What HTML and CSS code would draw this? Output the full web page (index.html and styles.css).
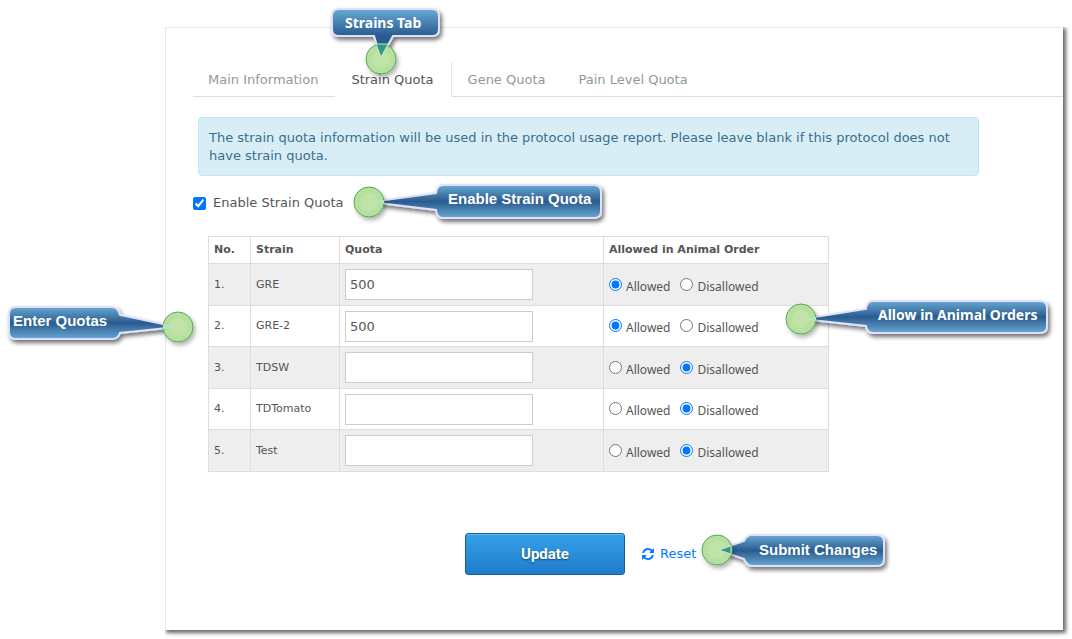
FILE: index.html
```
<!DOCTYPE html>
<html lang="en">
<head>
<meta charset="utf-8">
<title>Strain Quota</title>
<link rel="stylesheet" href="styles.css">
</head>
<body>
<main class="panel">
  <nav class="tabs">
    <a class="tab" href="#main">Main Information</a>
    <a class="tab active" href="#strain">Strain Quota</a>
    <a class="tab" href="#gene">Gene Quota</a>
    <a class="tab" href="#pain">Pain Level Quota</a>
  </nav>
  <p class="notice">The strain quota information will be used in the protocol usage report. Please leave blank if this protocol does not have strain quota.</p>
  <form class="form">
    <label class="enable"><input type="checkbox" checked>Enable Strain Quota</label>
    <table class="quota">
      <colgroup><col class="c-no"><col class="c-strain"><col class="c-quota"><col class="c-order"></colgroup>
      <thead><tr><th>No.</th><th>Strain</th><th>Quota</th><th>Allowed in Animal Order</th></tr></thead>
      <tbody>
        <tr><td>1.</td><td>GRE</td><td><input class="text" type="text" value="500" aria-label="Quota for GRE"></td>
          <td><div class="choices"><label><input type="radio" name="r1" checked><span>Allowed</span></label><label><input type="radio" name="r1"><span>Disallowed</span></label></div></td></tr>
        <tr><td>2.</td><td>GRE-2</td><td><input class="text" type="text" value="500" aria-label="Quota for GRE-2"></td>
          <td><div class="choices"><label><input type="radio" name="r2" checked><span>Allowed</span></label><label><input type="radio" name="r2"><span>Disallowed</span></label></div></td></tr>
        <tr><td>3.</td><td>TDSW</td><td><input class="text" type="text" aria-label="Quota for TDSW"></td>
          <td><div class="choices"><label><input type="radio" name="r3"><span>Allowed</span></label><label><input type="radio" name="r3" checked><span>Disallowed</span></label></div></td></tr>
        <tr><td>4.</td><td>TDTomato</td><td><input class="text" type="text" aria-label="Quota for TDTomato"></td>
          <td><div class="choices"><label><input type="radio" name="r4"><span>Allowed</span></label><label><input type="radio" name="r4" checked><span>Disallowed</span></label></div></td></tr>
        <tr><td>5.</td><td>Test</td><td><input class="text" type="text" aria-label="Quota for Test"></td>
          <td><div class="choices"><label><input type="radio" name="r5"><span>Allowed</span></label><label><input type="radio" name="r5" checked><span>Disallowed</span></label></div></td></tr>
      </tbody>
    </table>
    <div class="actions">
      <button class="update" type="button">Update</button>
      <a class="reset" href="#reset"><svg width="12" height="12" viewBox="0 0 1536 1536" aria-hidden="true"><path fill="currentColor" d="M1511 928q0 5-1 7-64 268-268 434.500T764 1536q-146 0-282.500-55T238 1324l-129 129q-19 19-45 19t-45-19-19-45V960q0-26 19-45t45-19h448q26 0 45 19t19 45-19 45l-137 137q71 66 161 102t187 36q134 0 250-65t186-179q11-17 53-117 8-23 30-23h192q13 0 22.500 9.500t9.500 22.500zm25-800v448q0 26-19 45t-45 19h-448q-26 0-45-19t-19-45 19-45l138-138Q969 256 768 256q-134 0-250 65T332 500q-11 17-53 117-8 23-30 23H50q-13 0-22.500-9.500T18 608v-7q65-268 270-434.500T768 0q146 0 284 55.500T1297 212l130-129q19-19 45-19t45 19 19 45z"/></svg>Reset</a>
    </div>
  </form>
</main>
<svg class="callouts" width="1072" height="639" viewBox="0 0 1072 639">
  <defs>
    <linearGradient id="half" gradientUnits="userSpaceOnUse" x1="0" y1="9" x2="0" y2="36"><stop offset="0" stop-color="#69a9d3"/><stop offset="1" stop-color="#2a5b8f"/></linearGradient>
    <linearGradient id="full" x1="0" y1="0" x2="0" y2="1"><stop offset="0" stop-color="#69a9d3"/><stop offset=".5" stop-color="#2a5b8f"/><stop offset="1" stop-color="#69a9d3"/></linearGradient>
    <filter id="shade" x="-20%" y="-30%" width="150%" height="180%"><feDropShadow dx="2" dy="3" stdDeviation="2" flood-color="#000" flood-opacity=".55"/></filter>
    <filter id="faint" x="-20%" y="-30%" width="150%" height="180%"><feDropShadow dx="2" dy="3" stdDeviation="2" flood-color="#000" flood-opacity=".3"/></filter>
  </defs>
  <g class="bubble" filter="url(#shade)">
    <path fill="url(#half)" d="M339 9H432Q439 9 439 16V29Q439 36 432 36H393L381 58L374 36H339Q332 36 332 29V16Q332 9 339 9Z"/>
    <path fill="url(#full)" d="M443 185H594Q601 185 601 192V211Q601 218 594 218H443Q437 218 436 210L370 202L436 193Q437 185 443 185Z"/>
    <path fill="url(#full)" d="M16 307H112Q118 307 120 315L177 327L120 333Q118 339 112 339H16Q9 339 9 332V314Q9 307 16 307Z"/>
    <path fill="url(#full)" d="M873 301H1040Q1047 301 1047 308V326Q1047 333 1040 333H873Q867 333 866 326L802 319L866 309Q867 301 873 301Z"/>
    <path fill="url(#full)" d="M752 535H877Q884 535 884 542V559Q884 566 877 566H752Q747 566 744 559L718 550L744 541Q747 535 752 535Z"/>
  </g>
  <g class="pin" filter="url(#faint)">
    <circle cx="381" cy="59" r="15"/><circle cx="369" cy="202" r="15"/><circle cx="178" cy="327" r="15"/><circle cx="801" cy="319" r="15"/><circle cx="717" cy="550" r="15"/>
  </g>
  <g class="pin-glow">
    <circle cx="381" cy="59" r="9"/><circle cx="369" cy="202" r="9"/><circle cx="178" cy="327" r="9"/><circle cx="801" cy="319" r="9"/><circle cx="717" cy="550" r="9"/>
  </g>
  <g class="tip">
    <path class="deep" d="M376 44L381 57L388 44Z"/><path d="M371 202L384 200V204Z"/><path d="M176 327L163 324V329Z"/><path d="M803 319L816 317V321Z"/><path class="deep" d="M719 550L731 546V554Z"/>
  </g>
  <g class="caption">
    <text class="humanist" x="345" y="28">Strains Tab</text>
    <text x="448" y="204">Enable Strain Quota</text>
    <text x="13" y="326">Enter Quotas</text>
    <text class="humanist" x="878" y="320">Allow in Animal Orders</text>
    <text x="759" y="555">Submit Changes</text>
  </g>
</svg>
</body>
</html>
```
FILE: styles.css
```
* { box-sizing: border-box; }
body {
  margin: 0;
  padding: 27px 9px 8px 165px;
  position: relative;
  background: #fff;
  color: #555;
  font: 13px/18px Verdana, "DejaVu Sans", sans-serif;
}
a { text-decoration: none; }
.panel {
  padding: 34px 0 55px 27px;
  border: 1px solid #e8e8e8;
  border-right: 0;
  border-bottom: 0;
  background: #fff;
  box-shadow: 2px 2px 4px 1px rgba(0, 0, 0, .6);
  clip-path: inset(0 -8px -8px 0);
}
.tabs { display: flex; }
.tabs::after { content: ""; flex: 1; border-bottom: 1px solid #ddd; }
.tab {
  padding: 9px 17px 7px 16px;
  border-bottom: 1px solid #ddd;
  color: #8d9a9e;
}
.tab:first-child { padding-left: 15px; }
.tab.active {
  border-bottom-color: transparent;
  border-right: 1px solid #e5e5e5;
  color: #555;
}
.notice {
  max-width: 782px;
  margin: 20px 84px 0 5px;
  padding: 11px 10px 10px;
  border: 1px solid #bce8f1;
  border-radius: 4px;
  background: #d9edf7;
  color: #3a6f8c;
}
.enable { display: flex; align-items: center; gap: 7px; margin-top: 18px; }
input[type="checkbox"], input[type="radio"] { width: 13px; height: 13px; margin: 0; accent-color: #0075ff; }
.quota {
  width: 621px;
  margin: 24px 0 0 15px;
  table-layout: fixed;
  border-collapse: collapse;
  font-size: 11px;
}
.c-no { width: 42px; }
.c-strain { width: 89px; }
.c-quota { width: 264px; }
.quota th, .quota td { padding: 0 5px; border: 1px solid #ddd; text-align: left; }
.quota th { height: 27px; }
.quota td { height: 42px; }
.quota tr:nth-child(even) td { height: 41px; }
.quota tbody tr:nth-child(odd) { background: #eee; }
.text {
  display: block;
  width: 188px;
  height: 31px;
  padding: 0 4px;
  border: 1px solid #ccc;
  background: #fff;
  color: #555;
  font: inherit;
  font-size: 13px;
}
.choices { display: flex; gap: 10px; padding-top: 2px; font-family: "Noto Sans", sans-serif; font-size: 12px; }
.choices label { display: flex; align-items: flex-start; gap: 4px; }
.choices span { padding-top: 2px; line-height: 14px; }
.actions { display: flex; align-items: center; gap: 17px; margin: 61px 0 0 272px; }
.update {
  width: 160px;
  height: 42px;
  border: 1px solid #17609c;
  border-radius: 3px;
  background: linear-gradient(#34a0e8, #217ccb);
  box-shadow: inset 0 1px #64b6ee;
  color: #fff;
  font: bold 15px Roboto, sans-serif;
  text-shadow: 0 1px 2px rgba(0, 0, 0, .5);
}
.reset { display: flex; align-items: center; gap: 6px; color: #007bff; }
.callouts { position: absolute; top: 0; left: 0; pointer-events: none; }
.bubble { stroke: #dfe0fa; stroke-width: 2; }
.pin { fill: #b9dfa0; stroke: #4cae50; stroke-width: 1; }
.pin-glow { fill: #c0e4a7; }
.tip { fill: #b0e6c0; }
.deep { fill: #34968a; stroke: #b5e8c4; stroke-width: 1; }
.caption { fill: #fff; font: bold 15px "Liberation Sans", Arial, sans-serif; }
.humanist { font: bold 14px "Noto Sans", sans-serif; }
```
